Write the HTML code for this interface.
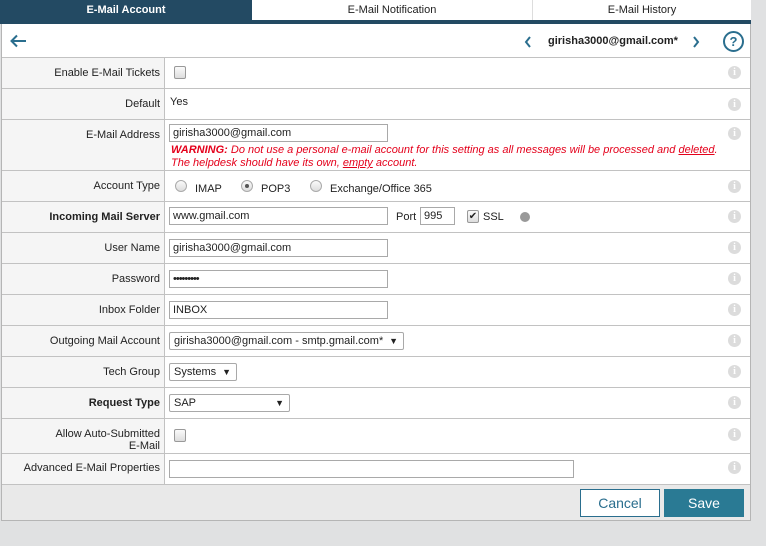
<!DOCTYPE html>
<html><head><style>
*{box-sizing:border-box;margin:0;padding:0}
body{width:766px;height:546px;background:#e0e1e2;font-family:"Liberation Sans",sans-serif;font-size:11px;color:#222;position:relative;overflow:hidden}
.a{position:absolute}
.tabs{left:0;top:0;width:751px;height:24px;background:#fff;border-bottom:4px solid #234a63}
.tab{top:0;height:20px;line-height:20px;text-align:center;font-size:11px}
.main{left:1px;top:24px;width:750px;height:497px;background:#fff;border:1px solid #b5b5b5;border-top:none}
.row{position:absolute;left:0;width:748px;border-top:1px solid #c2c2c2}
.lab{position:absolute;left:0;top:0;bottom:0;width:163px;background:#f5f5f5;border-right:1px solid #c2c2c2;text-align:right;padding-right:4px;padding-top:11px;line-height:12px}
.b{font-weight:bold}
.inp{position:absolute;height:18px;border:1px solid #a9a9a9;background:#fff;padding-left:3px;line-height:16px;font-size:11px}
.cb{position:absolute;width:12px;height:13px;border:1px solid #999;border-radius:2px;background:linear-gradient(#fafafa,#ddd)}
.info{position:absolute;left:726px;width:13px;height:13px;border-radius:50%;background:#dcdcdc;color:#fff;font-weight:bold;font-size:10px;text-align:center;line-height:13px;font-family:"Liberation Serif",serif}
.rad{position:absolute;width:12px;height:12px;border-radius:50%;border:1px solid #aaa;background:linear-gradient(#fafafa,#ddd)}
.sel{position:absolute;height:18px;border:1px solid #a9a9a9;border-radius:2px;background:#fff;padding-left:4px;line-height:16px;font-size:11px}
.sel span{position:absolute;right:5px;top:0;font-size:9px}
</style></head><body>
<div class="a tabs">
<div class="a tab" style="left:0;width:252px;background:#234a63;color:#fff;font-weight:bold">E-Mail Account</div>
<div class="a tab" style="left:252px;width:280px">E-Mail Notification</div>
<div class="a tab" style="left:532px;width:219px;border-left:1px solid #ddd">E-Mail History</div>
</div>
<div class="a main">
<svg class="a" style="left:8px;top:10px" width="18" height="14" viewBox="0 0 18 14"><path d="M16 7H2M7 1.5L1.5 7 7 12.5" fill="none" stroke="#2a6e8e" stroke-width="2"/></svg>
<svg class="a" style="left:522px;top:12px" width="8" height="12"><path d="M6 1L2 6l4 5" fill="none" stroke="#2a6e8e" stroke-width="2"/></svg>
<div class="a b" style="left:546px;top:11px;font-size:11px">girisha3000@gmail.com*</div>
<svg class="a" style="left:690px;top:12px" width="8" height="12"><path d="M2 1l4 5-4 5" fill="none" stroke="#2a6e8e" stroke-width="2"/></svg>
<div class="a" style="left:721px;top:7px;width:21px;height:21px;border:2px solid #2a6e8e;border-radius:50%;color:#2a6e8e;font-weight:bold;font-size:13px;text-align:center;line-height:17px">?</div>

<div class="row" style="top:33px;height:31px"><div class="lab" style="padding-top:9px">Enable E-Mail Tickets</div><div class="cb" style="left:172px;top:8px"></div><div class="info" style="top:8px">i</div></div>
<div class="row" style="top:64px;height:31px"><div class="lab" style="padding-top:9px">Default</div><div class="a" style="left:168px;top:7px">Yes</div><div class="info" style="top:9px">i</div></div>
<div class="row" style="top:95px;height:51px"><div class="lab" style="padding-top:9px">E-Mail Address</div><div class="inp" style="left:167px;top:4px;width:219px">girisha3000@gmail.com</div>
<div class="a" style="left:169px;top:24px;color:#e4001b;font-style:italic;font-size:11px;line-height:13px;white-space:nowrap"><b>WARNING:</b> Do not use a personal e-mail account for this setting as all messages will be processed and <u>deleted</u>.<br>The helpdesk should have its own, <u>empty</u> account.</div><div class="info" style="top:7px">i</div></div>
<div class="row" style="top:146px;height:31px"><div class="lab" style="padding-top:9px">Account Type</div>
<div class="rad" style="left:173px;top:9px"></div><div class="a" style="left:193px;top:12px">IMAP</div>
<div class="rad" style="left:239px;top:9px"><div class="a" style="left:3px;top:3px;width:4px;height:4px;border-radius:50%;background:#555"></div></div><div class="a" style="left:259px;top:12px">POP3</div>
<div class="rad" style="left:308px;top:9px"></div><div class="a" style="left:328px;top:12px">Exchange/Office 365</div><div class="info" style="top:9px">i</div></div>
<div class="row" style="top:177px;height:31px"><div class="lab b" style="padding-top:9px">Incoming Mail Server</div><div class="inp" style="left:167px;top:5px;width:219px">www.gmail.com</div>
<div class="a" style="left:394px;top:9px">Port</div><div class="inp" style="left:418px;top:5px;width:35px">995</div>
<div class="cb" style="left:465px;top:8px;text-align:center;font-size:10px;line-height:11px">✔</div><div class="a" style="left:481px;top:9px">SSL</div>
<div class="a" style="left:518px;top:10px;width:10px;height:10px;border-radius:50%;background:#999"></div><div class="info" style="top:8px">i</div></div>
<div class="row" style="top:208px;height:31px"><div class="lab" style="padding-top:9px">User Name</div><div class="inp" style="left:167px;top:6px;width:219px">girisha3000@gmail.com</div><div class="info" style="top:8px">i</div></div>
<div class="row" style="top:239px;height:31px"><div class="lab" style="padding-top:9px">Password</div><div class="inp" style="left:167px;top:6px;width:219px;letter-spacing:-1px">•••••••••</div><div class="info" style="top:8px">i</div></div>
<div class="row" style="top:270px;height:31px"><div class="lab" style="padding-top:9px">Inbox Folder</div><div class="inp" style="left:167px;top:6px;width:219px">INBOX</div><div class="info" style="top:8px">i</div></div>
<div class="row" style="top:301px;height:31px"><div class="lab" style="padding-top:9px">Outgoing Mail Account</div><div class="sel" style="left:167px;top:6px;width:235px">girisha3000@gmail.com - smtp.gmail.com*<span>▼</span></div><div class="info" style="top:8px">i</div></div>
<div class="row" style="top:332px;height:31px"><div class="lab" style="padding-top:9px">Tech Group</div><div class="sel" style="left:167px;top:6px;width:68px">Systems<span>▼</span></div><div class="info" style="top:8px">i</div></div>
<div class="row" style="top:363px;height:31px"><div class="lab b" style="padding-top:9px">Request Type</div><div class="sel" style="left:167px;top:6px;width:121px">SAP<span>▼</span></div><div class="info" style="top:8px">i</div></div>
<div class="row" style="top:394px;height:35px"><div class="lab" style="padding-top:9px">Allow Auto-Submitted<br>E-Mail</div><div class="cb" style="left:172px;top:10px"></div><div class="info" style="top:9px">i</div></div>
<div class="row" style="top:429px;height:31px"><div class="lab" style="padding-top:8px">Advanced E-Mail Properties</div><div class="inp" style="left:167px;top:6px;width:405px"></div><div class="info" style="top:7px">i</div></div>
<div class="row" style="top:460px;height:36px;background:#e9e9e9">
<div class="a" style="left:578px;top:4px;width:80px;height:28px;border:1px solid #2a6e8e;background:#fff;color:#2a6e8e;font-size:14px;text-align:center;line-height:26px">Cancel</div>
<div class="a" style="left:662px;top:4px;width:80px;height:28px;background:#2a7a94;color:#fff;font-size:14px;text-align:center;line-height:28px">Save</div>
</div>
</div>
</body></html>
